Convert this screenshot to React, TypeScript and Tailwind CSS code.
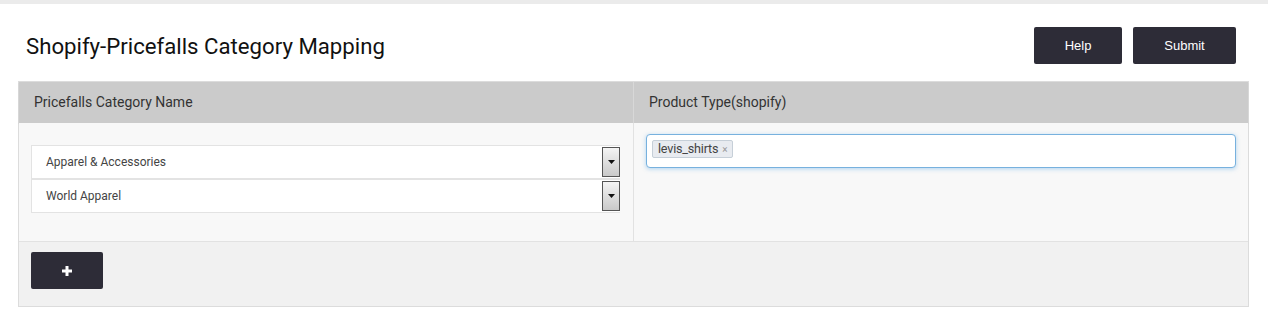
import React from "react";

function SelectBox({ label }: { label: string }) {
  return (
    <div className="flex h-[34px] items-center border border-[#e3e3e3] border-r-0 bg-white pl-[14px]">
      <span className="flex-1 text-[12px] text-[#444]">{label}</span>
      <div className="flex h-[30px] w-[18px] items-center justify-center border border-[#555] bg-gradient-to-b from-[#f4f4f4] to-[#c9c9c9]">
        <svg width="7" height="4" viewBox="0 0 7 4"><path d="M0 0h7L3.5 4z" fill="#111" /></svg>
      </div>
    </div>
  );
}

export default function App() {
  return (
    <div className="w-[1268px] h-[319px] bg-white font-['Roboto',sans-serif]">
      <div className="h-[4px] bg-[#ebebeb]" />
      <div className="flex items-center justify-between pl-[26px] pr-[32px] pt-[23px] pb-[17px]">
        <h1 className="text-[22.2px] text-[#111] leading-none pt-[2px]">Shopify-Pricefalls Category Mapping</h1>
        <div className="flex gap-[11px] font-['Liberation_Sans',sans-serif] text-[13px] text-white">
          <button className="h-[37px] w-[88px] rounded-[2px] bg-[#2d2c37]">Help</button>
          <button className="h-[37px] w-[103px] rounded-[2px] bg-[#2d2c37]">Submit</button>
        </div>
      </div>
      <div className="ml-[18px] w-[1231px] border border-[#dcdcdc]">
        <div className="grid grid-cols-[615px_1fr] h-[41px] bg-[#cbcbcb] text-[14px] text-[#333] shadow-[0_1px_1px_rgba(0,0,0,0.12)]">
          <div className="flex items-center pl-[15px] border-r border-[#d8d8d8]">Pricefalls Category Name</div>
          <div className="flex items-center pl-[15px]">Product Type(shopify)</div>
        </div>
        <div className="grid grid-cols-[615px_1fr] h-[119px] bg-[#f8f8f8] border-b border-[#e2e2e2]">
          <div className="border-r border-[#e2e2e2] pl-[12px] pr-[13px] pt-[22px] flex flex-col">
            <SelectBox label="Apparel & Accessories" />
            <SelectBox label="World Apparel" />
          </div>
          <div className="pl-[12px] pr-[12px] pt-[11px]">
            <div className="flex items-start h-[34px] rounded-[4px] border border-[#77b1de] bg-white shadow-[0_1px_4px_rgba(102,175,233,0.5)] pl-[5px] pt-[5px]">
              <span className="flex h-[18px] items-center rounded-[2px] border border-[#c6cfd8] bg-[#e8ebf0] px-[5px] text-[12.6px] text-[#444] tracking-[-0.2px]">
                levis_shirts<span className="ml-[4px] text-[10px] text-[#999]">×</span>
              </span>
            </div>
          </div>
        </div>
        <div className="h-[64px] bg-[#f1f1f1] pl-[12px] pt-[10px]">
          <button className="flex h-[37px] w-[72px] items-center justify-center rounded-[2px] bg-[#2d2c37]">
            <svg width="10" height="10" viewBox="0 0 10 10"><path d="M3.5 0h3v3.5H10v3H6.5V10h-3V6.5H0v-3h3.5z" fill="#fff" /></svg>
          </button>
        </div>
      </div>
    </div>
  );
}
